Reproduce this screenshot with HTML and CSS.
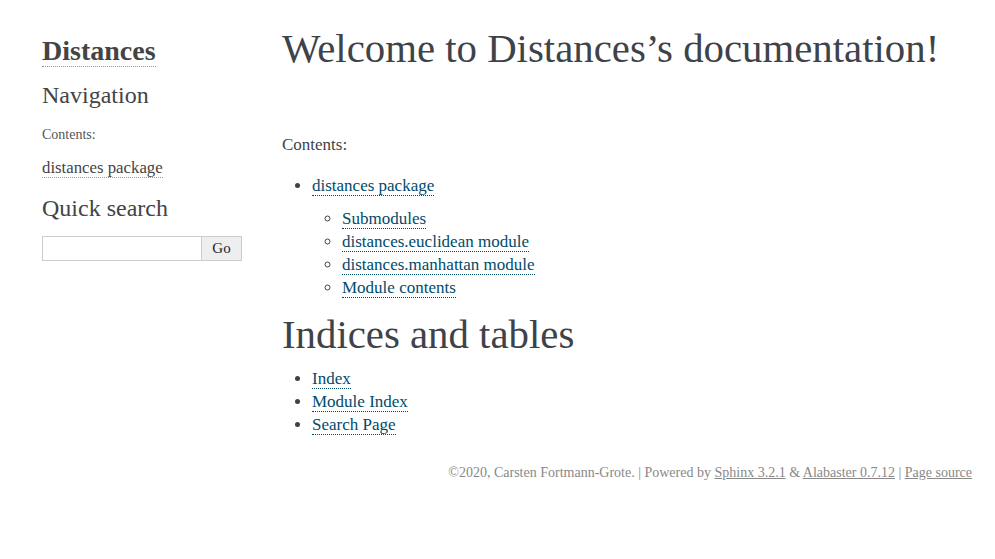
FILE: index.html
```html
<!DOCTYPE html>
<html lang="en">
<head>
<meta charset="utf-8">
<title>Welcome to Distances’s documentation! — Distances documentation</title>
<link rel="stylesheet" href="styles.css">
</head>
<body>
<div class="document">
  <div class="sidebar">
    <h1 class="logo"><a href="#">Distances</a></h1>
    <h3 class="side-title nav-title">Navigation</h3>
    <p class="caption">Contents:</p>
    <ul class="side-toc">
      <li><a href="#">distances package</a></li>
    </ul>
    <h3 class="side-title">Quick search</h3>
    <form class="search">
      <input type="text" class="search-input" aria-label="search">
      <button type="button" class="search-btn">Go</button>
    </form>
  </div>
  <div class="body">
    <h1 class="title">Welcome to Distances’s documentation!</h1>
    <p class="toc-caption">Contents:</p>
    <ul class="toc">
      <li><a href="#">distances package</a>
        <ul class="toc-sub">
          <li><a href="#">Submodules</a></li>
          <li><a href="#">distances.euclidean module</a></li>
          <li><a href="#">distances.manhattan module</a></li>
          <li><a href="#">Module contents</a></li>
        </ul>
      </li>
    </ul>
    <h1 class="section">Indices and tables</h1>
    <ul class="toc plain">
      <li><a href="#">Index</a></li>
      <li><a href="#">Module Index</a></li>
      <li><a href="#">Search Page</a></li>
    </ul>
  </div>
</div>
<div class="footer">
  ©2020, Carsten Fortmann-Grote. | Powered by <a href="#">Sphinx 3.2.1</a> &amp; <a href="#">Alabaster 0.7.12</a> | <a href="#">Page source</a>
</div>
</body>
</html>
```

FILE: styles.css
```css
html, body {
  margin: 0;
  padding: 0;
  background: #fff;
}
body {
  font-family: "Liberation Serif", "Times New Roman", serif;
  font-size: 17px;
  color: #000;
}
.document {
  display: flex;
  width: 940px;
  margin: 30px 0 0 32px;
}
.sidebar {
  width: 200px;
  flex: none;
  padding: 0 10px;
  font-size: 14px;
  line-height: 1.5;
  color: #444;
}
.logo {
  margin: 0 0 5px;
  font-size: 28px;
  line-height: 42px;
  font-weight: bold;
}
.logo a {
  color: #444;
  text-decoration: none;
  border-bottom: 1px dotted #999;
}
.side-title {
  margin: 0 0 5px;
  font-size: 24px;
  font-weight: normal;
  line-height: 36px;
  color: #444;
}
.nav-title {
  margin-bottom: 11px;
}
.caption {
  margin: 0;
  font-size: 14px;
  color: #555;
}
.side-toc {
  list-style: none;
  margin: 10px 0;
  padding: 0;
}
.side-toc a {
  font-size: 16.8px;
  color: #444;
  text-decoration: none;
  border-bottom: 1px dotted #999;
}
.search {
  display: flex;
  margin: 10px 0 0;
}
.search-input {
  width: 160px;
  height: 25px;
  box-sizing: border-box;
  border: 1px solid #ccc;
  margin: 0;
  padding: 0 4px;
  font-family: inherit;
  font-size: 14px;
}
.search-btn {
  width: 40px;
  height: 25px;
  box-sizing: border-box;
  margin: 0;
  border: 1px solid #ccc;
  border-left: none;
  background: #eee;
  color: #222;
  font-family: inherit;
  font-size: 15px;
  padding: 0;
}
.body {
  flex: 1;
  padding: 0 30px;
  color: #3e4349;
}
.title, .section {
  font-size: 40.8px;
  font-weight: normal;
  line-height: 37px;
  margin: 0 0 14px;
  color: #3e4349;
}
.title {
  margin-bottom: 66px;
}
.toc-caption {
  margin: 0;
  line-height: 23.8px;
}
.toc {
  margin: 17px 0;
  padding-left: 30px;
  line-height: 23px;
}
.toc-sub {
  margin: 10px 0 10px;
  padding-left: 30px;
  list-style: circle;
}
.plain {
  margin-top: 10px;
}
.toc a {
  color: #004b6b;
  text-decoration: none;
  border-bottom: 1px dotted #004b6b;
}
.footer {
  width: 940px;
  margin: 12px 0 30px 32px;
  font-size: 14px;
  color: #888;
  text-align: right;
}
.footer a {
  color: #888;
  text-decoration: underline;
}
```
